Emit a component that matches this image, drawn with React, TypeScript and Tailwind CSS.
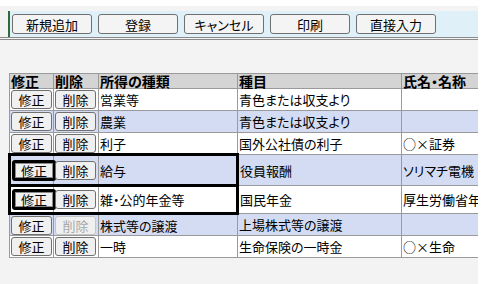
import React from "react";

interface Row {
  kind: string;
  item: string;
  name: string;
  blue?: boolean;
  selected?: boolean;
  height: string;
  deleteDisabled?: boolean;
}

const rows: Row[] = [
  { kind: "営業等", item: "青色または収支より", name: "", height: "h-[22px]" },
  { kind: "農業", item: "青色または収支より", name: "", blue: true, height: "h-[22px]" },
  { kind: "利子", item: "国外公社債の利子", name: "○×証券", height: "h-[22px]" },
  { kind: "給与", item: "役員報酬", name: "ソリマチ電機　（株）", blue: true, selected: true, height: "h-[31px]" },
  { kind: "雑・公的年金等", item: "国民年金", name: "厚生労働省年金局", selected: true, height: "h-[28px]" },
  { kind: "株式等の譲渡", item: "上場株式等の譲渡", name: "", blue: true, height: "h-[22px]", deleteDisabled: true },
  { kind: "一時", item: "生命保険の一時金", name: "○×生命", height: "h-[22px]" },
];

const toolbar = ["新規追加", "登録", "キャンセル", "印刷", "直接入力"];

function CellButton({ label, focused, disabled }: { label: string; focused?: boolean; disabled?: boolean }) {
  return (
    <button
      className={`rounded-[3px] bg-[#f0f0f0] text-[13px] leading-none ${
        focused
          ? "h-[21px] w-[44px] border-[3px] border-black shadow-[inset_0_0_0_1px_#8a8a8a]"
          : disabled
            ? "h-[19px] w-[41px] border border-[#c4c4c4] text-[#a8a8a8]"
            : "h-[19px] w-[41px] border border-[#707070] text-black"
      }`}
    >
      {label}
    </button>
  );
}

export default function App() {
  return (
    <div className="h-[284px] bg-white pt-[6px] font-['Noto_Sans_CJK_JP',sans-serif] text-black [font-feature-settings:'palt']">
      <div className="h-[278px] w-[478px] overflow-hidden bg-[#f3f3f3]">
        <div className="border-b-[3px] border-double border-[#8a8a8a] pt-[5px]">
          <div className="ml-2 flex h-[26px] items-center gap-[6px] border-l-2 border-[#2d6b3a] bg-[#dff0f8] pl-[2px]">
            {toolbar.map((label) => (
              <button
                key={label}
                className="h-[20px] w-[80px] rounded-[3px] border border-[#707070] bg-[#f4f4f4] text-[13px] leading-none"
              >
                {label}
              </button>
            ))}
          </div>
        </div>

        <div className="ml-2 mt-[33px] w-[560px]">
          <table className="w-[560px] table-fixed border-collapse text-[13px] leading-none">
            <colgroup>
              <col className="w-[44px]" />
              <col className="w-[45px]" />
              <col className="w-[139px]" />
              <col className="w-[164px]" />
              <col className="w-[168px]" />
            </colgroup>
            <thead>
              <tr className="h-[15px] bg-[#d4d4d4]">
                {["修正", "削除", "所得の種類", "種目", "氏名・名称"].map((h) => (
                  <th
                    key={h}
                    className="border border-[#9a9a9a] px-[1px] text-left text-[14px] font-bold"
                  >
                    {h}
                  </th>
                ))}
              </tr>
            </thead>
            <tbody>
              {rows.map((r) => (
                <tr key={r.kind} className={`${r.height} ${r.blue ? "bg-[#d3dcf3]" : "bg-white"}`}>
                  <td
                    className={`border border-[#9a9a9a] px-[1px] ${
                      r.selected ? "border-y-[3px] border-l-[3px] border-y-black border-l-black px-0" : ""
                    }`}
                  >
                    <CellButton label="修正" focused={r.selected} />
                  </td>
                  <td
                    className={`border border-[#9a9a9a] px-[1px] ${
                      r.selected ? "border-y-[3px] border-y-black" : ""
                    }`}
                  >
                    <CellButton label="削除" disabled={r.deleteDisabled} />
                  </td>
                  <td
                    className={`whitespace-nowrap border border-[#9a9a9a] px-[1px] ${
                      r.selected ? "border-y-[3px] border-r-[3px] border-y-black border-r-black" : ""
                    }`}
                  >
                    {r.kind}
                  </td>
                  <td className="whitespace-nowrap border border-[#9a9a9a] px-[1px]">{r.item}</td>
                  <td className="whitespace-nowrap border border-[#9a9a9a] px-[1px]">{r.name}</td>
                </tr>
              ))}
            </tbody>
          </table>
        </div>
      </div>
    </div>
  );
}
